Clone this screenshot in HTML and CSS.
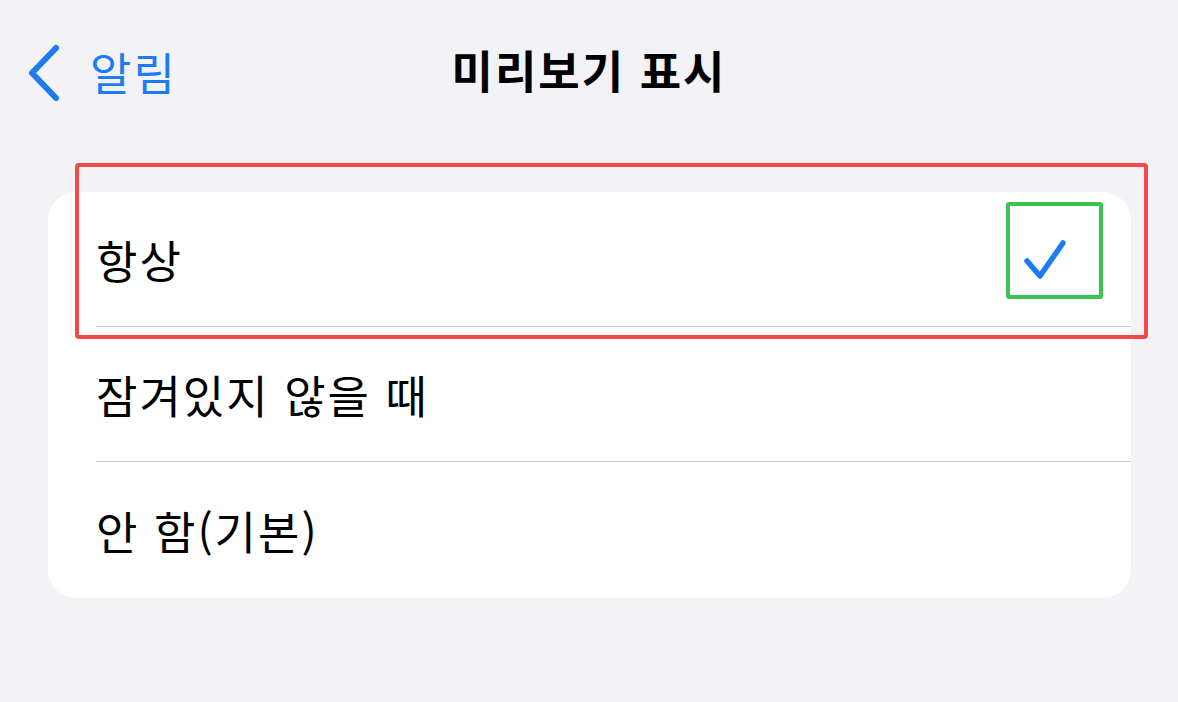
FILE: index.html
```html
<!DOCTYPE html>
<html lang="ko">
<head>
<meta charset="utf-8">
<link rel="stylesheet" href="styles.css">
</head>
<body>
<header class="nav">
  <div class="back">
    <svg class="chev" width="36" height="60" viewBox="0 0 36 60"><path d="M30 5 L6 30 L30 55" fill="none" stroke="#1f7bf2" stroke-width="6" stroke-linecap="round" stroke-linejoin="round"/></svg>
    <span class="back-label">알림</span>
  </div>
  <h1 class="title">미리보기 표시</h1>
  <div class="spacer"></div>
</header>
<main class="card">
  <div class="row">
    <div class="row-inner">
      <span class="label">항상</span>
      <svg class="check" width="48" height="44" viewBox="0 0 48 44"><path d="M6 24 L19 39 L42 6" fill="none" stroke="#1f7bf2" stroke-width="5.5" stroke-linecap="round" stroke-linejoin="round"/></svg>
    </div>
  </div>
  <div class="row">
    <div class="row-inner">
      <span class="label">잠겨있지 않을 때</span>
    </div>
  </div>
  <div class="row">
    <div class="row-inner last">
      <span class="label">안 함(기본)</span>
    </div>
  </div>
  <div class="mark-red"></div>
  <div class="mark-green"></div>
</main>
</body>
</html>
```
FILE: styles.css
```css
html, body {
  margin: 0;
  padding: 0;
}
body {
  background: #f2f2f7;
  width: 1178px;
  height: 702px;
  overflow: hidden;
  font-family: "Noto Sans CJK KR", "Noto Sans", sans-serif;
  color: #000;
}
.nav {
  height: 150px;
  display: grid;
  grid-template-columns: 1fr auto 1fr;
  align-items: start;
  padding-top: 40px;
  box-sizing: border-box;
}
.back {
  display: flex;
  align-items: center;
  padding-left: 26px;
  gap: 28px;
  color: #1f7bf2;
}
.chev {
  display: block;
  margin-top: 3px;
}
.back-label {
  font-size: 45px;
  line-height: 60px;
  letter-spacing: 2px;
}
.title {
  margin: 0;
  font-size: 45px;
  font-weight: 700;
  line-height: 60px;
  letter-spacing: 2px;
}
.card {
  position: relative;
  margin: 42px 47px 0 48px;
  background: #fff;
  border-radius: 28px;
}
.row {
  padding-left: 48px;
}
.row-inner {
  height: 134px;
  border-bottom: 1px solid #c8c8cc;
  display: flex;
  align-items: center;
  justify-content: space-between;
  padding-right: 62px;
}
.row-inner.last {
  border-bottom: none;
  height: 136px;
}
.label {
  font-size: 45px;
  letter-spacing: 2px;
  line-height: 1;
}
.check {
  display: block;
  margin-top: 0;
}
.mark-red {
  position: absolute;
  left: 27px;
  top: -29px;
  width: 1073px;
  height: 176px;
  border: 4px solid #f24a46;
  border-radius: 4px;
  box-sizing: border-box;
}
.mark-green {
  position: absolute;
  left: 958px;
  top: 10px;
  width: 97px;
  height: 97px;
  border: 4px solid #3cc453;
  border-radius: 3px;
  box-sizing: border-box;
}
```
